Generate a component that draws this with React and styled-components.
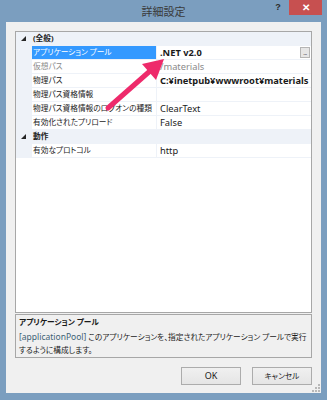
import React from "react";
import styled, { createGlobalStyle } from "styled-components";

const GlobalStyle = createGlobalStyle`
  html, body { margin: 0; padding: 0; }
  body {
    width: 327px;
    height: 400px;
    overflow: hidden;
    font-family: "Noto Sans", "Noto Sans CJK JP", sans-serif;
    font-feature-settings: "palt";
  }
`;

const Window = styled.div`
  position: relative;
  width: 327px;
  height: 400px;
  background: #7b9ebf;
  display: flex;
  flex-direction: column;
`;

const TitleBar = styled.div`
  height: 22px;
  display: grid;
  grid-template-columns: 1fr auto 1fr;
  align-items: start;
`;

const Title = styled.div`
  grid-column: 2;
  font-size: 11px;
  line-height: 23px;
  color: #3a3a3a;
`;

const Caption = styled.div`
  grid-column: 3;
  justify-self: end;
  display: flex;
  align-items: flex-start;
  margin-right: 5px;
`;

const HelpButton = styled.div`
  width: 22px;
  height: 15px;
  font-family: "Liberation Sans", sans-serif;
  font-weight: bold;
  font-size: 9px;
  line-height: 14px;
  text-align: center;
  color: #2a2a2a;
`;

const CloseButton = styled.div`
  width: 33px;
  height: 15px;
  background: #c75050;
  color: #fff;
  font-family: "Liberation Sans", sans-serif;
  font-weight: bold;
  font-size: 10px;
  line-height: 15px;
  text-align: center;
`;

const Client = styled.div`
  position: relative;
  flex: 1;
  margin: 0 6px 7px 6px;
  background: #f0f0f0;
  padding: 9px 9px 8px 9px;
  display: flex;
  flex-direction: column;
`;

const Grid = styled.div`
  height: 282px;
  box-sizing: border-box;
  border: 1px solid #a7a7a7;
  background: #fff;
  display: flex;
  flex-direction: column;
`;

const Row = styled.div`
  display: grid;
  grid-template-columns: 16px 124px 1fr;
  height: 14px;
  box-sizing: border-box;
  border-bottom: 1px solid #eef2f8;
  font-size: 7.7px;
  line-height: 13px;
  color: #1a1a1a;
  background: ${(p) => (p.$category ? "#eef2f8" : "#fff")};
`;

const Margin = styled.div`
  background: #eef2f8;
  display: flex;
  align-items: center;
  padding-left: 5px;
`;

const Expander = styled.svg`
  width: 5px;
  height: 5px;
  display: block;
`;

const CategoryName = styled.div`
  grid-column: 2 / 4;
  font-weight: bold;
  padding-left: 1px;
`;

const Name = styled.div`
  padding-left: 1px;
  white-space: nowrap;
  overflow: hidden;
  background: ${(p) => (p.$selected ? "#3399ff" : "transparent")};
  color: ${(p) => (p.$selected ? "#fff" : p.$readonly ? "#8a8a8a" : "#1a1a1a")};
`;

const Value = styled.div`
  border-left: 1px solid #eef2f8;
  padding-left: 3px;
  display: flex;
  align-items: center;
  justify-content: space-between;
  white-space: nowrap;
  overflow: hidden;
  font-size: 9.3px;
  font-weight: ${(p) => (p.$bold ? "bold" : "normal")};
  color: ${(p) => (p.$readonly ? "#8a8a8a" : "#1a1a1a")};
`;

const Ellipsis = styled.div`
  width: 10px;
  height: 11px;
  margin-right: 1px;
  box-sizing: border-box;
  border: 1px solid #b5b5b5;
  background: #e6e6e6;
  font-size: 6px;
  line-height: 11px;
  text-align: center;
  color: #333;
  font-weight: normal;
  letter-spacing: -0.5px;
`;

const Arrow = styled.svg`
  position: absolute;
  left: 0;
  top: 0;
  width: 327px;
  height: 400px;
  pointer-events: none;
`;

const Description = styled.div`
  margin-top: 1px;
  height: 44px;
  box-sizing: border-box;
  border: 1px solid #a7a7a7;
  background: #f0f0f0;
  padding: 1px 3px 0 3px;
  font-size: 7.7px;
  line-height: 13.5px;
  color: #1a1a1a;
`;

const DescTitle = styled.div`
  font-weight: bold;
`;

const DescText = styled.div``;

const PropKey = styled.span`
  font-size: 8.5px;
  color: #3d6275;
`;

const ButtonRow = styled.div`
  margin-top: 9px;
  display: flex;
  justify-content: flex-end;
  gap: 11px;
`;

const Button = styled.div`
  width: 60px;
  height: 18px;
  box-sizing: border-box;
  border: 1px solid #acacac;
  background: linear-gradient(#f0f0f0, #e5e5e5);
  font-size: ${(p) => (p.$latin ? "9px" : "7.7px")};
  line-height: 16px;
  text-align: center;
  color: #1a1a1a;
`;

const Grip = styled.svg`
  position: absolute;
  right: 1px;
  bottom: 1px;
  width: 8px;
  height: 8px;
`;

const rows = [
  { type: "cat", name: "(全般)" },
  { name: "アプリケーション プール", value: ".NET v2.0", bold: true, selected: true, button: true },
  { name: "仮想パス", value: "/materials", readonly: true },
  { name: "物理パス", value: "C:¥inetpub¥wwwroot¥materials", bold: true },
  { name: "物理パス資格情報", value: "" },
  { name: "物理パス資格情報のログオンの種類", value: "ClearText" },
  { name: "有効化されたプリロード", value: "False" },
  { type: "cat", name: "動作" },
  { name: "有効なプロトコル", value: "http" },
];

export default function App() {
  return (
    <Window>
      <GlobalStyle />
      <TitleBar>
        <Title>詳細設定</Title>
        <Caption>
          <HelpButton>?</HelpButton>
          <CloseButton>✕</CloseButton>
        </Caption>
      </TitleBar>
      <Client>
        <Grid>
          {rows.map((r, i) =>
            r.type === "cat" ? (
              <Row key={i} $category>
                <Margin>
                  <Expander viewBox="0 0 5 5">
                    <polygon points="5,0 5,5 0,5" fill="#262626" />
                  </Expander>
                </Margin>
                <CategoryName>{r.name}</CategoryName>
              </Row>
            ) : (
              <Row key={i}>
                <Margin />
                <Name $selected={r.selected} $readonly={r.readonly}>{r.name}</Name>
                <Value $bold={r.bold} $readonly={r.readonly}>
                  <span>{r.value}</span>
                  {r.button && <Ellipsis>...</Ellipsis>}
                </Value>
              </Row>
            )
          )}
        </Grid>
        <Description>
          <DescTitle>アプリケーション プール</DescTitle>
          <DescText>
            <PropKey>[applicationPool]</PropKey> このアプリケーションを、指定されたアプリケーション プールで実行するように構成します。
          </DescText>
        </Description>
        <ButtonRow>
          <Button $latin>OK</Button>
          <Button>キャンセル</Button>
        </ButtonRow>
        <Grip viewBox="0 0 8 8">
          {[[6, 0], [6, 3], [3, 3], [6, 6], [3, 6], [0, 6]].map(([x, y], i) => (
            <rect key={i} x={x} y={y} width="2" height="2" fill="#b8b8b8" />
          ))}
        </Grip>
      </Client>
      <Arrow viewBox="0 0 327 400">
        <line x1="108" y1="108" x2="150" y2="71" stroke="#ee2a6b" strokeWidth="5" strokeLinecap="round" />
        <polygon points="164,59 142,64 156,80" fill="#ee2a6b" />
      </Arrow>
    </Window>
  );
}
